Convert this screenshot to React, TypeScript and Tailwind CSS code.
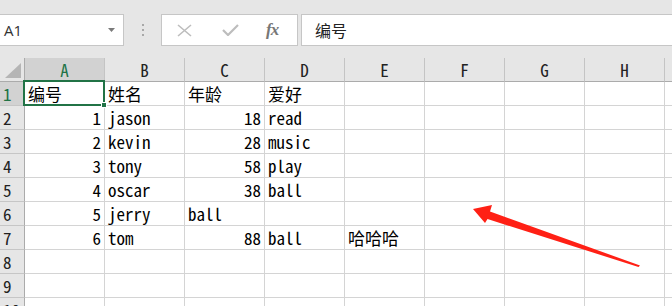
import React from "react"

const cols = ["A", "B", "C", "D", "E", "F", "G", "H", ""]

type Cell = { v: string; right?: boolean }

const rows: Cell[][] = [
  [{ v: "编号" }, { v: "姓名" }, { v: "年龄" }, { v: "爱好" }],
  [{ v: "1", right: true }, { v: "jason" }, { v: "18", right: true }, { v: "read" }],
  [{ v: "2", right: true }, { v: "kevin" }, { v: "28", right: true }, { v: "music" }],
  [{ v: "3", right: true }, { v: "tony" }, { v: "58", right: true }, { v: "play" }],
  [{ v: "4", right: true }, { v: "oscar" }, { v: "38", right: true }, { v: "ball" }],
  [{ v: "5", right: true }, { v: "jerry" }, { v: "ball" }],
  [{ v: "6", right: true }, { v: "tom" }, { v: "88", right: true }, { v: "ball" }, { v: "哈哈哈" }],
  [],
  [],
  [],
]

const cellFont = "font-['Noto_Sans_Mono_CJK_SC','Liberation_Mono','Noto_Sans_CJK_SC',monospace] text-[17px]"

function FormulaBar() {
  return (
    <div className="h-[58px] bg-[#e6e6e6] pt-[14px] flex flex-col">
      <div className="flex items-stretch h-[32px]">
        <div className="w-[124px] bg-white border-y border-r border-[#c6c6c6] flex items-center justify-between pl-[4px] pr-[8px]">
          <span className="font-['Open_Sans','Liberation_Sans',sans-serif] text-[15px] text-[#333]">A1</span>
          <svg width="7" height="4" viewBox="0 0 7 4">
            <path d="M0 0h7L3.5 4z" fill="#7a7a7a" />
          </svg>
        </div>
        <div className="w-[37px] flex flex-col items-center justify-center gap-[3px]">
          <div className="w-[2px] h-[2px] bg-[#a8a8a8]" />
          <div className="w-[2px] h-[2px] bg-[#a8a8a8]" />
          <div className="w-[2px] h-[2px] bg-[#a8a8a8]" />
        </div>
        <div className="w-[137px] bg-white border border-[#c6c6c6] flex items-center pl-[15px]">
          <svg width="15" height="13" viewBox="0 0 15 13">
            <path d="M1 1l13 11M14 1L1 12" stroke="#bdbdbd" strokeWidth="1.6" fill="none" />
          </svg>
          <svg width="17" height="12" viewBox="0 0 17 12" className="ml-[30px]">
            <path d="M1 6l5 5L16 1" stroke="#bdbdbd" strokeWidth="2.2" fill="none" />
          </svg>
          <span className="ml-[27px] font-['Liberation_Serif',serif] italic font-bold text-[17px] text-[#777] tracking-[-1px]">
            fx
          </span>
        </div>
        <div className="ml-[3px] flex-1 bg-white border-y border-l border-[#c6c6c6] flex items-center pl-[13px]">
          <span className="font-['Noto_Sans_CJK_SC',sans-serif] text-[16px] text-[#222]">编号</span>
        </div>
      </div>
    </div>
  )
}

function Grid() {
  return (
    <div className="relative">
      <div className="grid grid-cols-[25px_repeat(9,80px)] auto-rows-[24px]">
        <div className="bg-[#e6e6e6] border-r border-b border-[#ababab] relative">
          <svg width="17" height="15" viewBox="0 0 17 15" className="absolute left-[5px] top-[5px]">
            <path d="M16 0v15H0z" fill="#b5b5b5" />
          </svg>
        </div>
        {cols.map((c, i) => (
          <div
            key={i}
            className={`${i === 0 ? "bg-[#d2d2d2] text-[#217346]" : "bg-[#e6e6e6] text-[#222]"} border-r border-b border-r-[#c4c4c4] border-b-[#ababab] flex items-center justify-center ${cellFont}`}
          >
            {c}
          </div>
        ))}
        {rows.map((r, ri) => (
          <React.Fragment key={ri}>
            <div
              className={`${ri === 0 ? "bg-[#d2d2d2] text-[#217346]" : "bg-[#e6e6e6] text-[#222]"} border-r border-b border-r-[#ababab] border-b-[#c6c6c6] flex items-end pl-[3px] ${cellFont} leading-[22px]`}
            >
              {ri + 1}
            </div>
            {cols.map((c, ci) => {
              const cell = r[ci]
              return (
                <div
                  key={ci}
                  className={`border-r border-b border-[#d4d4d4] flex items-end whitespace-nowrap text-black ${cellFont} leading-[22px] ${cell?.right ? "justify-end pr-[3px]" : "pl-[3px]"}`}
                >
                  {cell?.v}
                </div>
              )
            })}
          </React.Fragment>
        ))}
      </div>
      {/* selection box around A1 */}
      <div className="absolute left-[23px] top-[22px] w-[82px] h-[26px] border-2 border-[#217346]" />
      <div className="absolute left-[101px] top-[44px] w-[6px] h-[6px] bg-[#217346] border border-white" />
    </div>
  )
}

function Arrow() {
  return (
    <svg width="672" height="306" viewBox="0 0 672 306" className="absolute left-0 top-0 pointer-events-none">
      <path
        d="M473 209 L492 205 L490 211.5 L640 265.5 L638.5 267 L487.5 219 L485 223 Z"
        fill="#ff2015"
      />
    </svg>
  )
}

export default function App() {
  return (
    <div className="relative w-[672px] h-[306px] overflow-hidden bg-white">
      <FormulaBar />
      <Grid />
      <Arrow />
    </div>
  )
}
